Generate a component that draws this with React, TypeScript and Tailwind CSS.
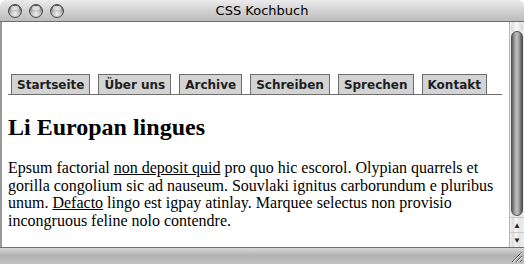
import React from 'react';

const tabs = ['Startseite', 'Über uns', 'Archive', 'Schreiben', 'Sprechen', 'Kontakt'];

function Light() {
  return (
    <span className="w-[14px] h-[14px] rounded-full border border-[#4a4a4a] bg-[radial-gradient(circle_at_50%_75%,#f4f4f4_0%,#a9a9a9_55%,#6c6c6c_100%)] shadow-[inset_0_1px_1px_rgba(0,0,0,0.4)] flex justify-center">
      <span className="mt-[1px] w-[8px] h-[4px] rounded-full bg-[#e9e9e9] opacity-80" />
    </span>
  );
}

export default function App() {
  return (
    <div className="w-[524px] h-[264px] flex flex-col overflow-hidden bg-white">
      {/* Title bar */}
      <div className="h-[22px] shrink-0 rounded-t-[6px] border-b border-[#6f6f6f] bg-[linear-gradient(#ececec,#d2d2d2_50%,#bcbcbc)] flex items-center relative">
        <div className="flex items-center gap-[7px] pl-[8px]">
          <Light />
          <Light />
          <Light />
        </div>
        <div className="absolute inset-0 flex items-center justify-center font-['Lucida_Grande','DejaVu_Sans',sans-serif] text-[13px] text-black">
          CSS Kochbuch
        </div>
      </div>

      {/* Body */}
      <div className="flex-1 flex min-h-0">
        <div className="flex-1 border-l-2 border-[#9a9a9a] pl-[6px] pr-[7px] font-['Liberation_Serif',serif] text-black">
          <ul className="mt-[52px] flex gap-[8px] pl-[3px] border-b border-[#6e6e6e]">
            {tabs.map((t) => (
              <li
                key={t}
                className="h-[20px] px-[5px] flex items-center bg-[#d3d3d3] border border-b-0 border-[#6e6e6e] font-['DejaVu_Sans',sans-serif] font-bold text-[12px] text-[#1e1e1e]"
              >
                {t}
              </li>
            ))}
          </ul>
          <h2 className="mt-[18px] text-[24px] font-bold leading-[28px]">Li Europan lingues</h2>
          <p className="mt-[18px] text-[16px] leading-[17.5px]">
            Epsum factorial <a className="underline">non deposit quid</a> pro quo hic escorol. Olypian quarrels et
            <br />
            gorilla congolium sic ad nauseum. Souvlaki ignitus carborundum e pluribus
            <br />
            unum. <a className="underline">Defacto</a> lingo est igpay atinlay. Marquee selectus non provisio
            <br />
            incongruous feline nolo contendre.
          </p>
        </div>

        {/* Scrollbar */}
        <div className="w-[15px] shrink-0 flex flex-col bg-[repeating-linear-gradient(90deg,#f2f2f2_0px,#dcdcdc_3px,#f7f7f7_6px,#e4e4e4_9px,#f0f0f0_15px)] border-l border-[#b5b5b5]">
          <div className="h-[8px] mx-[1px] rounded-t-full bg-[linear-gradient(90deg,#d8d8d8,#fbfbfb,#d0d0d0)]" />
          <div className="flex-1 mx-[1px] my-[1px] rounded-full border border-[#505050] bg-[linear-gradient(90deg,#5e5e5e,#a8a8a8_30%,#c0c0c0_50%,#949494_75%,#505050)]" />
          <div className="h-[15px] flex items-center justify-center border-t border-[#c8c8c8] text-[8px] leading-none text-[#222]">▲</div>
          <div className="h-[15px] flex items-center justify-center border-t border-[#c8c8c8] text-[8px] leading-none text-[#222]">▼</div>
        </div>
      </div>

      {/* Bottom bar */}
      <div className="h-[17px] shrink-0 border-t border-[#6f6f6f] bg-[linear-gradient(#d6d6d6,#b0b0b0_50%,#c4c4c4)] flex justify-end items-end">
        <svg width="14" height="14" viewBox="0 0 14 14" className="mr-[1px] mb-[1px]">
          <path d="M13 3 L3 13 M13 7 L7 13 M13 11 L11 13" stroke="#555" strokeWidth="1" />
          <path d="M13 4 L4 13 M13 8 L8 13" stroke="#f4f4f4" strokeWidth="1" />
        </svg>
      </div>
    </div>
  );
}
